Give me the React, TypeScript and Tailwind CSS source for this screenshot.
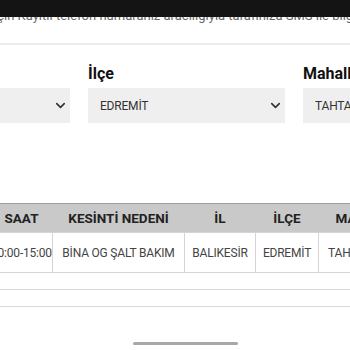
import { ChevronDown } from "lucide-react";

const cols = [
  { label: "", value: "" },
  { label: "İlçe", value: "EDREMİT" },
  { label: "Mahalle", value: "TAHTAKUŞLAR" },
];

export default function App() {
  return (
    <div className="relative w-[350px] h-[350px] overflow-hidden bg-white" style={{ fontFamily: "Roboto, 'Noto Sans', sans-serif" }}>
      {/* status bar over the page */}
      <div className="absolute top-0 left-0 right-0 h-[17px] bg-[#141414] z-10" />

      <p className="mt-[8px] whitespace-nowrap text-[13px] leading-[16px] text-[#666] -ml-[6px]">
        için Kayıtlı telefon numaranız aracılığıyla tarafınıza SMS ile bilgilendirme yapılacaktır.
      </p>

      <div className="mt-[19px] h-[2px] bg-[#ececec]" />

      <div className="flex gap-[18px] -ml-[127px] mt-[19px]">
        {cols.map((c, i) => (
          <div key={i} className="w-[197px] shrink-0">
            <div className="text-[16px] leading-[20px] font-bold text-[#111] h-[20px] whitespace-nowrap">{c.label}</div>
            <div className="mt-[4px] h-[35px] bg-[#efefef] flex items-center pl-[12px] pr-[2px]">
              <span className="flex-1 text-[12px] tracking-[-0.2px] text-[#333] whitespace-nowrap overflow-hidden">{c.value}</span>
              <ChevronDown size={15} strokeWidth={2.6} className="text-[#333]" />
            </div>
          </div>
        ))}
      </div>

      <table className="mt-[80px] -ml-[10px] table-fixed border-collapse w-[480px]">
        <colgroup>
          <col className="w-[62px]" />
          <col className="w-[132px]" />
          <col className="w-[71px]" />
          <col className="w-[63px]" />
          <col className="w-[152px]" />
        </colgroup>
        <thead>
          <tr className="bg-[#c9c9c9] border-t border-[#9e9e9e] h-[29px]">
            {["SAAT", "KESİNTİ NEDENİ", "İL", "İLÇE", "MAHALLE"].map((h, i) => (
              <th key={h} className={`text-[13.5px] font-bold text-[#222] whitespace-nowrap ${i === 0 ? "text-right pr-[14px]" : i === 4 ? "text-left pl-[17px]" : "text-center"}`}>
                {h}
              </th>
            ))}
          </tr>
        </thead>
        <tbody>
          <tr className="h-[40px]">
            {["10:00-15:00", "BİNA OG ŞALT BAKIM", "BALIKESİR", "EDREMİT", "TAHTAKUŞLAR"].map((v, i) => (
              <td key={v} className={`border border-[#d4d4d4] text-[12px] tracking-[-0.2px] text-[#444] whitespace-nowrap overflow-hidden ${i === 0 ? "text-right pr-[10px]" : i === 4 ? "text-left pl-[9px]" : "text-center"}`}>
                {v}
              </td>
            ))}
          </tr>
        </tbody>
      </table>

      <div className="mt-[16px] border-t border-[#d8d8d8]" />
      <div className="mt-[16px] border-t border-[#d8d8d8]" />

      <div className="absolute bottom-[5px] left-[133px] w-[105px] h-[3px] rounded-full bg-[#a8a8a8]" />
    </div>
  );
}
